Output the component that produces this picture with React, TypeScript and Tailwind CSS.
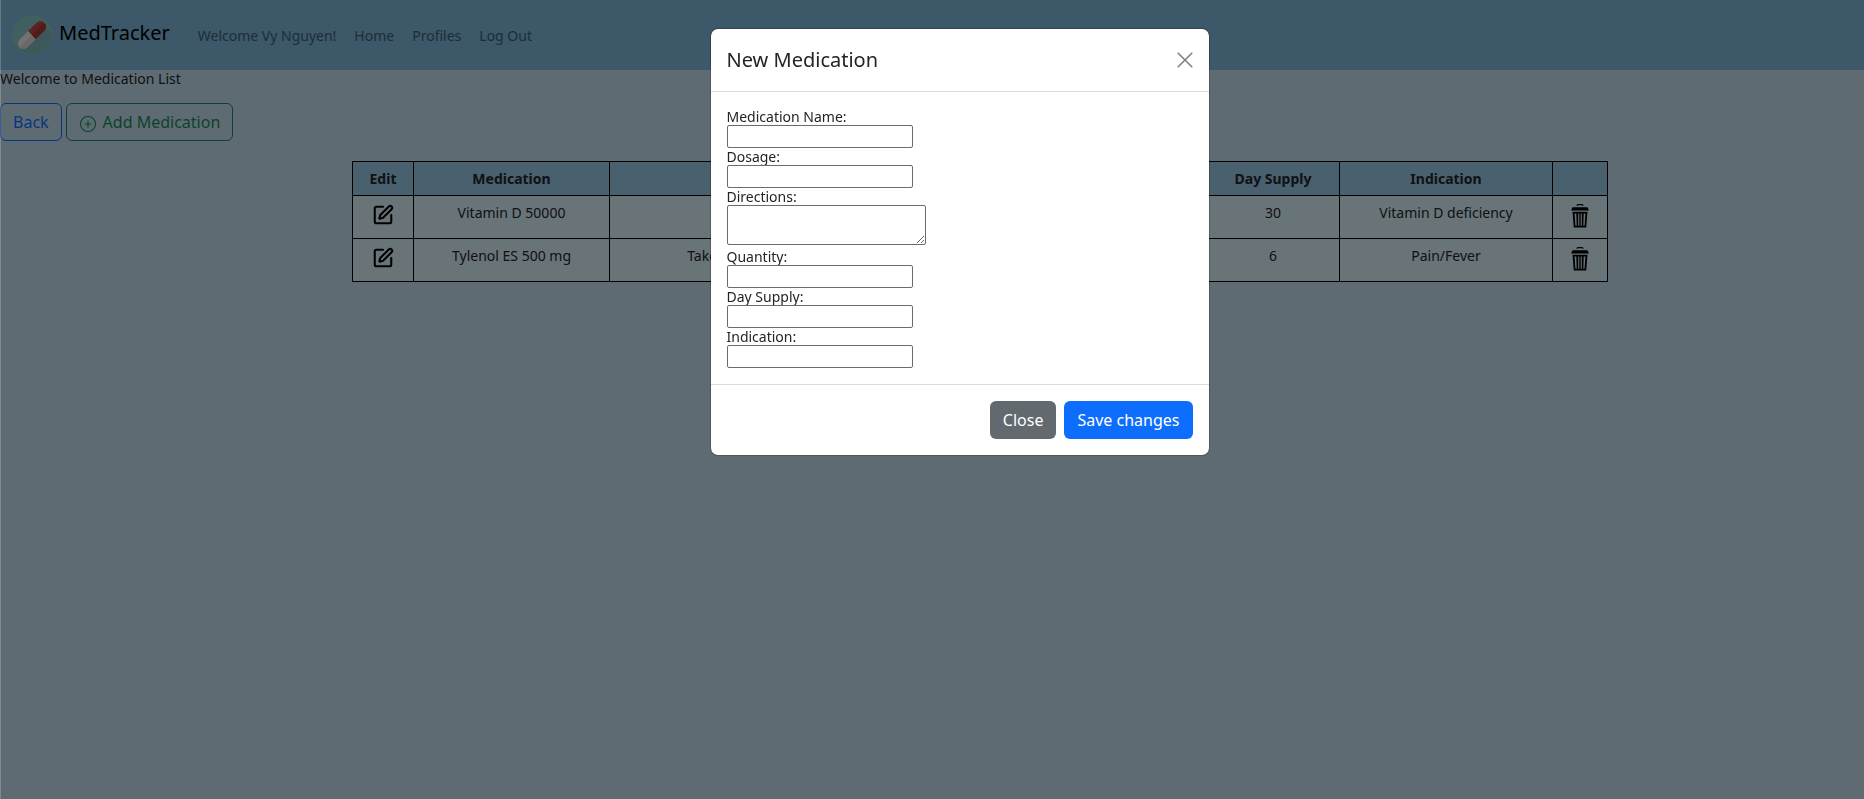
import { CirclePlus, SquarePen } from "lucide-react";

type Medication = {
  name: string;
  directions: string;
  quantity: number;
  daySupply: number;
  indication: string;
};

const medications: Medication[] = [
  {
    name: "Vitamin D 50000",
    directions: "Take 1 capsule by mouth weekly",
    quantity: 4,
    daySupply: 30,
    indication: "Vitamin D deficiency",
  },
  {
    name: "Tylenol ES 500 mg",
    directions: "Take 1 to 2 tablets by mouth every 6 hours as needed",
    quantity: 24,
    daySupply: 6,
    indication: "Pain/Fever",
  },
];

const navLinks = ["Home", "Profiles", "Log Out"];

function PillLogo() {
  return (
    <svg viewBox="0 0 40 40" className="size-10" aria-hidden="true">
      <circle cx="20" cy="20" r="20" fill="#84bfc0" />
      <path d="M32 9 L39.5 18 A20 20 0 0 1 12 38 L8 33 Z" fill="#78b0b4" />
      <g transform="rotate(-45 20 20)">
        <path d="M20 14.5 H8 a5.5 5.5 0 0 0 0 11 H20 Z" fill="#e4e4e4" />
        <path d="M20 20 H2.500 a5.500 5.500 0 0 0 5.500 5.500 H20 Z" fill="#d2d2d2" />
        <path d="M20 14.500 H32 a5.500 5.500 0 0 1 0 11 H20 Z" fill="#b8443e" />
        <path d="M20 20 H37.500 a5.500 5.500 0 0 1 -5.500 5.500 H20 Z" fill="#a03834" />
      </g>
    </svg>
  );
}

function TrashIcon() {
  return (
    <svg viewBox="0 0 18 24" className="h-6 w-[18px]" aria-hidden="true">
      <path d="M6 1.800 Q6 .6 7 .6 H11 Q12 .6 12 1.800" fill="none" stroke="black" strokeWidth="1.200" />
      <path d="M1.500 3.200 H16.500 L18 6.600 H0 Z" fill="black" />
      <path
        fillRule="evenodd"
        d="M1.500 7.800 H16.500 L15.200 23.400 H2.800 Z M3.600 9.400 L4.400 21.800 H5.700 L5.300 9.400 Z M7.200 9.400 V21.800 H8.300 V9.400 Z M9.700 9.400 V21.800 H10.800 V9.400 Z M12.700 9.400 L12.300 21.800 H13.600 L14.400 9.400 Z"
        fill="black"
      />
    </svg>
  );
}

function Field({ id, label, multiline }: { id: string; label: string; multiline?: boolean }) {
  return (
    <div className="flex flex-col items-start">
      <label htmlFor={id} className="text-sm leading-[17px]">
        {label}
      </label>
      {multiline ? (
        <textarea
          id={id}
          className="mb-[3px] h-10 w-[199px] rounded-[2px] border border-[#6b6b6b] bg-white px-0.5"
        />
      ) : (
        <input
          id={id}
          type="text"
          className="h-[23px] w-[186px] rounded-[2px] border border-[#6b6b6b] bg-white px-0.5"
        />
      )}
    </div>
  );
}

function NewMedicationDialog() {
  return (
    <div className="fixed inset-0 flex items-start justify-center border-l border-white/20 bg-black/50 pt-7 pl-[54px]">
      <form
        role="dialog"
        aria-labelledby="dialog-title"
        className="w-[500px] rounded-lg border border-black/20 bg-white bg-clip-padding text-[#212529]"
      >
        <header className="flex items-center justify-between border-b border-[#d8dbde] p-4">
          <h5 id="dialog-title" className="text-xl leading-[30px]">
            New Medication
          </h5>
          <button type="button" aria-label="Close dialog" className="text-[#808080]">
            <svg viewBox="0 0 16 16" className="size-4" aria-hidden="true">
              <path d="M1.2 1.2 L14.8 14.8 M14.8 1.2 L1.2 14.8" stroke="currentColor" strokeWidth="1.6" strokeLinecap="round" />
            </svg>
          </button>
        </header>
        <div className="p-4">
          <Field id="name" label="Medication Name:" />
          <Field id="dosage" label="Dosage:" />
          <Field id="directions" label="Directions:" multiline />
          <Field id="quantity" label="Quantity:" />
          <Field id="day-supply" label="Day Supply:" />
          <Field id="indication" label="Indication:" />
        </div>
        <footer className="flex justify-end gap-2 border-t border-[#d8dbde] p-4 text-base leading-6 text-white">
          <button type="button" className="rounded-md bg-[#62696f] px-[13px] py-[7px]">
            Close
          </button>
          <button type="button" className="rounded-md bg-[#0d6efd] px-[13px] py-[7px]">
            Save changes
          </button>
        </footer>
      </form>
    </div>
  );
}

export default function App() {
  return (
    <div className="min-h-screen bg-[#bed6e6] font-['Noto_Sans',sans-serif] text-sm text-[#212529]">
      <nav className="flex h-[70px] items-center bg-[#78b0d2] pl-3">
        <a href="#" className="flex items-center gap-[7px]">
          <PillLogo />
          <span className="pb-1 text-xl leading-[30px] text-black">MedTracker</span>
        </a>
        <div className="ml-7 flex gap-[18px] pt-0.5 text-[#3c5c70]">
          <span>Welcome Vy Nguyen!</span>
          {navLinks.map((link) => (
            <a key={link} href="#">
              {link}
            </a>
          ))}
        </div>
      </nav>

      <main>
        <h1 className="leading-[17px]">Welcome to Medication List</h1>
        <div className="mt-4 flex gap-1 text-base leading-6">
          <button type="button" className="rounded-md border border-[#0d6efd] px-3 py-1.5 text-[#0d6efd]">
            Back
          </button>
          <button
            type="button"
            className="flex items-center gap-1.5 rounded-md border border-[#198754] px-3 py-1.5 text-[#198754]"
          >
            <CirclePlus className="mt-1 size-[18px]" strokeWidth={1.5} />
            Add Medication
          </button>
        </div>

        <div className="mt-5 pr-64 pl-[352px]">
          <table className="w-full table-fixed border-collapse text-center">
            <colgroup>
              <col className="w-[61px]" />
              <col className="w-[196px]" />
              <col />
              <col className="w-[92px]" />
              <col className="w-[133px]" />
              <col className="w-[213px]" />
              <col className="w-[55px]" />
            </colgroup>
            <thead>
              <tr className="h-[34px] bg-[#92c0dc]">
                {["Edit", "Medication", "Directions", "Quantity", "Day Supply", "Indication", ""].map((title) => (
                  <th key={title} className="border border-black font-bold">
                    {title}
                  </th>
                ))}
              </tr>
            </thead>
            <tbody>
              {medications.map((med) => (
                <tr key={med.name} className="h-[43px] bg-[#d2e8f0] align-top">
                  <td className="border border-black pt-2">
                    <button type="button" aria-label={`Edit ${med.name}`} className="block w-full text-black">
                      <SquarePen className="mx-auto size-[22px]" strokeWidth={2.25} />
                    </button>
                  </td>
                  <td className="border border-black pt-[7px]">{med.name}</td>
                  <td className="border border-black pt-[7px]">{med.directions}</td>
                  <td className="border border-black pt-[7px]">{med.quantity}</td>
                  <td className="border border-black pt-[7px]">{med.daySupply}</td>
                  <td className="border border-black pt-[7px]">{med.indication}</td>
                  <td className="border border-black pt-2">
                    <button type="button" aria-label={`Delete ${med.name}`} className="flex w-full justify-center">
                      <TrashIcon />
                    </button>
                  </td>
                </tr>
              ))}
            </tbody>
          </table>
        </div>
      </main>

      <NewMedicationDialog />
    </div>
  );
}
